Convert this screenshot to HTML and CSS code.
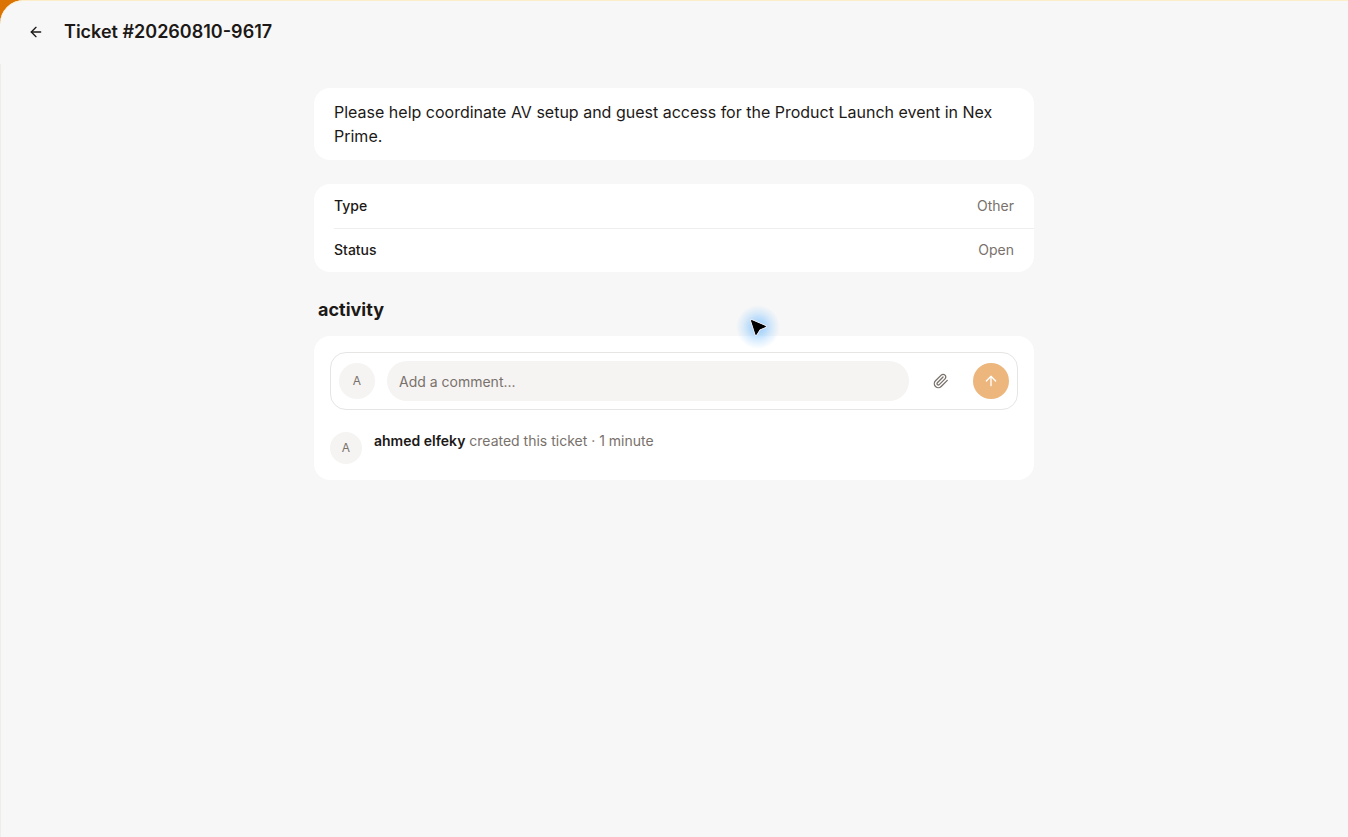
FILE: index.html
```html
<!DOCTYPE html>
<html lang="en">
<head>
    <meta charset="UTF-8">
    <meta name="viewport" content="width=device-width, initial-scale=1.0">
    <title>Ticket #20260810-9617</title>
    <link rel="stylesheet" href="styles.css">
</head>
<body>
    <div class="panel">
        <header class="topbar">
            <button class="back" type="button" aria-label="Back">
                <svg width="16" height="16" viewBox="0 0 24 24" fill="none" stroke="currentColor" stroke-width="2" stroke-linecap="round" stroke-linejoin="round"><path d="m12 19-7-7 7-7"/><path d="M19 12H5"/></svg>
            </button>
            <h1>Ticket #20260810-9617</h1>
        </header>
        <main class="content">
            <div class="column">
                <p class="card description">Please help coordinate AV setup and guest access for the Product Launch event in Nex Prime.</p>
                <dl class="card details">
                    <div class="row">
                        <dt>Type</dt>
                        <dd>Other</dd>
                    </div>
                    <div class="row">
                        <dt>Status</dt>
                        <dd>Open</dd>
                    </div>
                </dl>
                <section class="activity">
                    <h2>activity</h2>
                    <div class="card feed">
                        <form class="composer">
                            <span class="avatar avatar-lg">A</span>
                            <input class="comment" type="text" placeholder="Add a comment..." aria-label="Add a comment">
                            <button class="attach" type="button" aria-label="Attach file">
                                <svg width="16" height="16" viewBox="0 0 24 24" fill="none" stroke="currentColor" stroke-width="2" stroke-linecap="round" stroke-linejoin="round"><path d="m21.44 11.05-9.19 9.19a6 6 0 0 1-8.49-8.49l8.57-8.57A4 4 0 1 1 18 8.84l-8.59 8.57a2 2 0 0 1-2.83-2.83l8.49-8.48"/></svg>
                            </button>
                            <button class="send" type="submit" aria-label="Send" disabled>
                                <svg width="16" height="16" viewBox="0 0 24 24" fill="none" stroke="currentColor" stroke-width="2" stroke-linecap="round" stroke-linejoin="round"><path d="m5 12 7-7 7 7"/><path d="M12 19V5"/></svg>
                            </button>
                        </form>
                        <div class="event">
                            <span class="avatar">A</span>
                            <p><strong>ahmed elfeky</strong> created this ticket · 1 minute</p>
                        </div>
                    </div>
                </section>
            </div>
        </main>
    </div>
    <!-- Pointer with a soft glow -->
    <div class="pointer">
        <svg width="22" height="22" viewBox="0 0 22 22"><path d="M4.500 4.500 18.500 10.500 12.500 13 9 18.500Z" fill="#000" stroke="#e6e6f0" stroke-width="3" stroke-linejoin="round" paint-order="stroke"/><path d="M4.500 4.500 18.500 10.500 12.500 13 9 18.500Z" stroke="#000" stroke-linejoin="round"/></svg>
    </div>
</body>
</html>
```

FILE: styles.css
```css
* {
    box-sizing: border-box;
}
body {
    margin: 0;
    font-family: Inter, "Liberation Sans", sans-serif;
    font-size: 14px;
    line-height: 20px;
    color: #1c1917;
    background: linear-gradient(to right, #dc7404 24px, #fdeecb 24px);
}
h1, h2, p, dl, dd {
    margin: 0;
}
h1, h2 {
    font-size: 18px;
    line-height: 28px;
    font-weight: 600;
}
button {
    display: flex;
    align-items: center;
    justify-content: center;
    flex-shrink: 0;
    padding: 0;
    border: none;
    border-radius: 50%;
    background: none;
    color: inherit;
    cursor: pointer;
}
.panel {
    display: flex;
    flex-direction: column;
    min-height: 100vh;
    border-top-left-radius: 24px;
    background: #f7f7f7;
    box-shadow: inset 0 1px #fdeecb;
}
.topbar {
    display: flex;
    align-items: center;
    gap: 8px;
    height: 64px;
    padding: 0 16px;
}
.back {
    width: 40px;
    height: 40px;
}
.content {
    flex: 1;
    padding: 24px;
    box-shadow: inset 1px 0 #eeedec;
}
.column {
    display: flex;
    flex-direction: column;
    gap: 24px;
    max-width: 720px;
    margin: 0 auto;
}
.card {
    border-radius: 16px;
    background: #fff;
}
.description {
    padding: 12px 20px;
    font-size: 16px;
    line-height: 24px;
}
.details {
    padding-left: 20px;
}
.row {
    display: flex;
    align-items: center;
    justify-content: space-between;
    height: 44px;
    padding-right: 20px;
}
.row + .row {
    box-shadow: inset 0 1px #efeeed;
}
.row dt {
    font-weight: 500;
}
.row dd {
    color: #79716b;
}
.activity h2 {
    padding: 0 4px 12px;
    font-weight: 700;
}
.feed {
    padding: 16px;
}
.composer {
    display: flex;
    align-items: center;
    gap: 12px;
    padding: 8px;
    border: 1px solid #e7e5e4;
    border-radius: 16px;
}
.avatar {
    display: flex;
    align-items: center;
    justify-content: center;
    flex-shrink: 0;
    width: 32px;
    height: 32px;
    border-radius: 50%;
    background: #f5f4f3;
    font-size: 12px;
    color: #79716b;
}
.avatar-lg {
    width: 36px;
    height: 36px;
}
.comment {
    flex: 1;
    min-width: 0;
    height: 40px;
    padding: 0 12px;
    border: none;
    border-radius: 20px;
    background: #f5f4f3;
    font: inherit;
    color: inherit;
}
.comment::placeholder {
    color: #79716b;
    opacity: 1;
}
.attach {
    width: 40px;
    height: 40px;
    color: #79716b;
}
.send {
    width: 36px;
    height: 36px;
    background: #ecb67d;
    color: #fff;
    cursor: default;
}
.event {
    display: flex;
    gap: 12px;
    padding-top: 22px;
    line-height: 18px;
    color: #79716b;
}
.event strong {
    font-weight: 600;
    color: #1c1917;
}
.pointer {
    position: absolute;
    top: 305px;
    left: 736px;
    display: flex;
    padding: 11px;
    background: radial-gradient(closest-side, rgba(130, 195, 253, 0.7) 20%, rgba(147, 203, 253, 0.3) 65%, rgba(147, 203, 253, 0));
    pointer-events: none;
}
```
